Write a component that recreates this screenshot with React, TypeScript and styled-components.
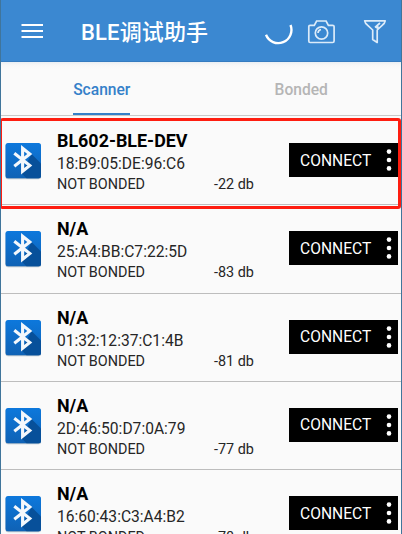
import React from "react";
import styled, { createGlobalStyle } from "styled-components";

const GlobalStyle = createGlobalStyle`
  * { box-sizing: border-box; }
  body { margin: 0; overflow: hidden; font-family: Roboto, "Noto Sans CJK SC", sans-serif; }
`;

const Screen = styled.main`
  width: 402px;
  height: 534px;
  overflow: hidden;
  display: flex;
  flex-direction: column;
  background: #fafafa;
  border: solid #40759b;
  border-width: 0 1px;
`;

const AppBar = styled.header`
  flex: none;
  display: flex;
  align-items: center;
  height: 62px;
  padding-left: 20px;
  background: #3b88d1;
  border-bottom: 1px solid #347bc0;
  color: #fff;
  svg { display: block; flex: none; }
`;

const Title = styled.h1`
  margin: 5px 0 0 38px;
  width: 182px;
  font-size: 22px;
  line-height: 30px;
  font-weight: 500;
  letter-spacing: 0.15px;
  white-space: nowrap;
`;

const Actions = styled.div`
  display: flex;
  align-items: center;
  margin-top: 2px;
`;

const Tabs = styled.nav`
  flex: none;
  display: grid;
  grid-template-columns: 1fr 1fr;
  justify-items: center;
  height: 54px;
  padding-left: 1px;
  background: linear-gradient(#e9eef3 0, #f7f7f7 3px, #fafafa 7px);
  border-bottom: 1px solid #c9c9c9;
`;

const Tab = styled.div<{ $active?: boolean }>`
  height: 53px;
  padding-top: 18px;
  font-size: 15.6px;
  line-height: 20px;
  font-weight: 500;
  color: ${(p) => (p.$active ? "#3480c9" : "#b5b5b5")};
  border-bottom: 2px solid ${(p) => (p.$active ? "#3480c9" : "transparent")};
`;

const List = styled.div`
  flex: none;
  position: relative;
  margin-top: 1px;
`;

const Row = styled.article`
  display: flex;
  height: 88.3px;
  padding: 13px 2px 0 4px;
  border-bottom: 1px solid #bdbdbd;
`;

const Details = styled.div`
  width: 232px;
  margin-left: 16px;
  color: #262626;
`;

const Name = styled.h2`
  margin: 0;
  font-size: 17.9px;
  line-height: 22px;
  font-weight: 700;
  color: #000;
`;

const Address = styled.div`
  padding-top: 1px;
  font-size: 15.6px;
  line-height: 22px;
`;

const Status = styled.div`
  display: flex;
  font-size: 14.4px;
  line-height: 19px;
  span:first-child { width: 157px; }
`;

const Connect = styled.button`
  display: flex;
  align-items: center;
  justify-content: space-between;
  width: 109px;
  height: 34px;
  margin: 13px 0 0;
  padding: 0 6px 0 11px;
  border: 0;
  background: #000;
  color: #fff;
  font: 400 15.6px/34px Roboto, sans-serif;
`;

const ConnectLabel = styled.span`
  padding-top: 1px;
`;

const DeviceIcon = styled.svg`
  flex: none;
  width: 36px;
  height: 37px;
  margin-top: 13px;
`;

const Highlight = styled.div`
  position: absolute;
  left: -1px;
  top: 1px;
  width: 401px;
  height: 91px;
  border: 3px solid #fe1d10;
  border-left-width: 2px;
  border-radius: 3px;
`;

const devices = [
  { name: "BL602-BLE-DEV", address: "18:B9:05:DE:96:C6", rssi: -22 },
  { name: "N/A", address: "25:A4:BB:C7:22:5D", rssi: -83 },
  { name: "N/A", address: "01:32:12:37:C1:4B", rssi: -81 },
  { name: "N/A", address: "2D:46:50:D7:0A:79", rssi: -77 },
  { name: "N/A", address: "16:60:43:C3:A4:B2", rssi: -78 },
];

const Bluetooth = () => (
  <DeviceIcon viewBox="0 0 36 37">
    <defs>
      <linearGradient id="tile" x1="0" y1="0" x2="0" y2="1">
        <stop offset="0" stopColor="#0d78dc" />
        <stop offset="1" stopColor="#0f62b5" />
      </linearGradient>
    </defs>
    <rect x=".5" y=".8" width="35.5" height="35.5" rx="2.5" fill="#b9c3cc" />
    <rect x=".5" y="0" width="35.5" height="35.300" rx="2.5" fill="url(#tile)" />
    <path d="M26.500 11 36 20.500v12.300q0 2.500-2.500 2.500H21.500l-5-5z" fill="#07509a" />
    <path d="M9.300 10.300 24.800 22.500 17.600 28.300V5.300L24.800 11 9.300 23.200" fill="none" stroke="#f4f8fc" strokeWidth="3.100" />
  </DeviceIcon>
);

const Dots = () => (
  <svg width="6" height="24" viewBox="0 0 6 24" fill="#fff">
    <circle cx="3" cy="3.600" r="2.300" />
    <circle cx="3" cy="12" r="2.300" />
    <circle cx="3" cy="20.400" r="2.300" />
  </svg>
);

export default function App() {
  return (
    <>
      <GlobalStyle />
      <Screen>
        <AppBar>
          <svg width="22" height="16" viewBox="0 0 22 16" fill="#fff">
            <path d="M.5 1h21.500v2H.5zM.5 7h21.500v2H.5zM.5 13h21.500v2H.5z" />
          </svg>
          <Title>BLE调试助手</Title>
          <Actions>
            <svg width="43" height="28" viewBox="263 18 43 28" fill="none" stroke="#fff" strokeWidth="2.400">
              <path d="M266 34.800a12.700 12.700 0 1 0 24.500-9.800" />
            </svg>
            <svg width="57" height="28" viewBox="306 18 57 28" fill="none" stroke="#dcebf9" strokeWidth="1.700">
              <path d="M308.800 26.500q0-1.200 1.200-1.200h4.300l2.300-4.300h9.500l2.300 4.300h4.200q1.500 0 1.500 1.300v14.500q0 1.400-1.500 1.400h-22.500q-1.300 0-1.300-1.400z" />
              <circle cx="321.500" cy="33" r="6.200" />
              <path d="M318 33q.3-3 3-3.500" />
            </svg>
            <svg width="24" height="28" viewBox="363 18 24 28" fill="none" stroke="#dcebf9" strokeWidth="1.700" strokeLinejoin="round">
              <path d="M364.700 20.800h20.500q-.5 2.500-2.500 4l-5.500 5.200v12.500l-4.500-3v-9.500l-5.500-5.200q-2-1.500-2.500-4zM375 27.500l5-4.500M376.500 28.500l2-2" />
            </svg>
          </Actions>
        </AppBar>
        <Tabs>
          <Tab $active>Scanner</Tab>
          <Tab>Bonded</Tab>
        </Tabs>
        <List>
          {devices.map((d) => (
            <Row key={d.address}>
              <Bluetooth />
              <Details>
                <Name>{d.name}</Name>
                <Address>{d.address}</Address>
                <Status>
                  <span>NOT BONDED</span>
                  <span>{d.rssi} db</span>
                </Status>
              </Details>
              <Connect>
                <ConnectLabel>CONNECT</ConnectLabel>
                <Dots />
              </Connect>
            </Row>
          ))}
          <Highlight />
        </List>
      </Screen>
    </>
  );
}
